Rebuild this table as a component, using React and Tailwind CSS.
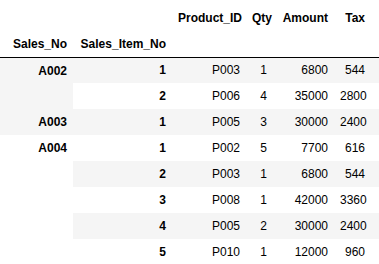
import React from 'react';

const rows = [
  { sales: 'A002', span: 2, item: 1, pid: 'P003', qty: 1, amount: 6800, tax: 544 },
  { item: 2, pid: 'P006', qty: 4, amount: 35000, tax: 2800 },
  { sales: 'A003', span: 1, item: 1, pid: 'P005', qty: 3, amount: 30000, tax: 2400 },
  { sales: 'A004', span: 5, item: 1, pid: 'P002', qty: 5, amount: 7700, tax: 616 },
  { item: 2, pid: 'P003', qty: 1, amount: 6800, tax: 544 },
  { item: 3, pid: 'P008', qty: 1, amount: 42000, tax: 3360 },
  { item: 4, pid: 'P005', qty: 2, amount: 30000, tax: 2400 },
  { item: 5, pid: 'P010', qty: 1, amount: 12000, tax: 960 },
];

const cell = 'h-[26px] px-[6px] py-0 text-right align-middle leading-[14px]';

export default function App() {
  return (
    <div className="w-[379px] h-[264px] overflow-hidden bg-white pt-[5px] font-['Liberation_Sans',Arial,sans-serif] text-[12px] text-black">
      <table className="table-fixed border-collapse w-[379px]">
        <colgroup>
          <col className="w-[73px]" />
          <col className="w-[99px]" />
          <col className="w-[74px]" />
          <col className="w-[27px]" />
          <col className="w-[61px]" />
          <col className="w-[45px]" />
        </colgroup>
        <thead className="border-b border-black">
          <tr>
            <th className={cell}></th>
            <th className={cell}></th>
            <th className={`${cell} font-bold`}>Product_ID</th>
            <th className={`${cell} font-bold`}>Qty</th>
            <th className={`${cell} font-bold`}>Amount</th>
            <th className={`${cell} font-bold pr-[14px]`}>Tax</th>
          </tr>
          <tr>
            <th className={`${cell} font-bold`}>Sales_No</th>
            <th className={`${cell} font-bold`}>Sales_Item_No</th>
            <th className={cell}></th>
            <th className={cell}></th>
            <th className={cell}></th>
            <th className={cell}></th>
          </tr>
        </thead>
        <tbody>
          {rows.map((r, i) => (
            <tr key={i} className={i % 2 === 0 ? 'bg-[#f5f5f5]' : 'bg-white'}>
              {r.sales && (
                <th
                  rowSpan={r.span}
                  className="px-[6px] pt-[6px] pb-0 text-right align-top leading-[14px] font-bold"
                >
                  {r.sales}
                </th>
              )}
              <th className={`${cell} font-bold`}>{r.item}</th>
              <td className={cell}>{r.pid}</td>
              <td className={cell}>{r.qty}</td>
              <td className={cell}>{r.amount}</td>
              <td className={`${cell} pr-[14px]`}>{r.tax}</td>
            </tr>
          ))}
        </tbody>
      </table>
    </div>
  );
}
